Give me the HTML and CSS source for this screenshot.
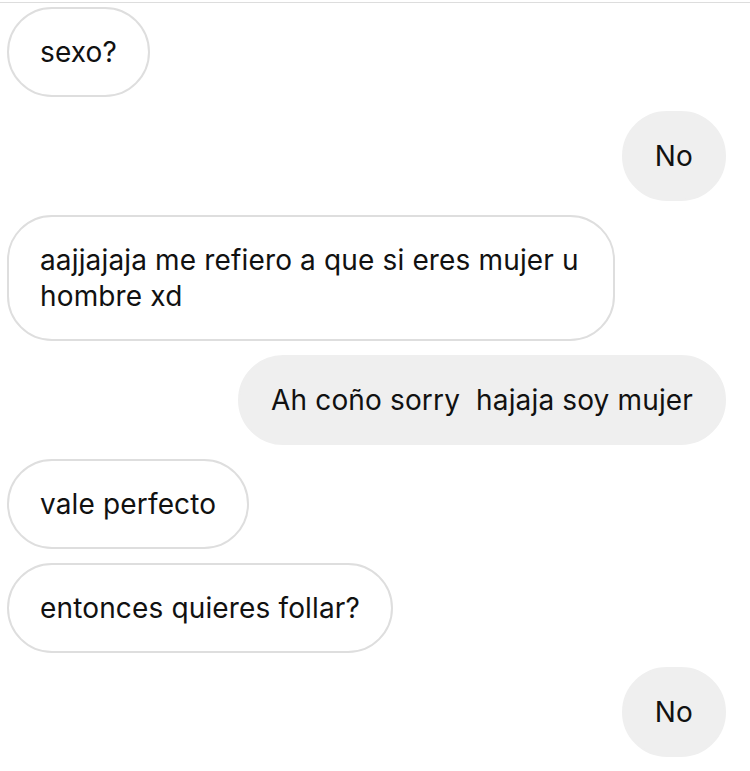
FILE: index.html
```html
<!DOCTYPE html>
<html lang="es">
<head>
<meta charset="utf-8">
<link rel="stylesheet" href="styles.css">
</head>
<body>
<div class="topline"></div>
<div class="chat">
  <div class="msg in">sexo?</div>
  <div class="msg out">No</div>
  <div class="msg in">aajjajaja me refiero a que si eres mujer u hombre xd</div>
  <div class="msg out">Ah coño sorry&nbsp; hajaja soy mujer</div>
  <div class="msg in">vale perfecto</div>
  <div class="msg in">entonces quieres follar?</div>
  <div class="msg out">No</div>
</div>
</body>
</html>
```
FILE: styles.css
```css
html, body {
  margin: 0;
  padding: 0;
  background: #ffffff;
}
body {
  width: 750px;
  height: 771px;
  overflow: hidden;
  font-family: "Inter", "Liberation Sans", sans-serif;
  color: #111111;
}
.topline {
  height: 1px;
  margin-top: 2px;
  background: #dddddd;
}
.chat {
  display: flex;
  flex-direction: column;
  gap: 14px;
  padding: 4px 24px 0 7px;
}
.msg {
  box-sizing: border-box;
  max-width: 608px;
  font-size: 28px;
  line-height: 36px;
  letter-spacing: 0.15px;
  padding: 25px 31px;
  border-radius: 45px;
  border: 2px solid transparent;
}
.in {
  align-self: flex-start;
  background: #ffffff;
  border-color: #dedede;
}
.out {
  align-self: flex-end;
  background: #efefef;
  border-color: #efefef;
}
```
